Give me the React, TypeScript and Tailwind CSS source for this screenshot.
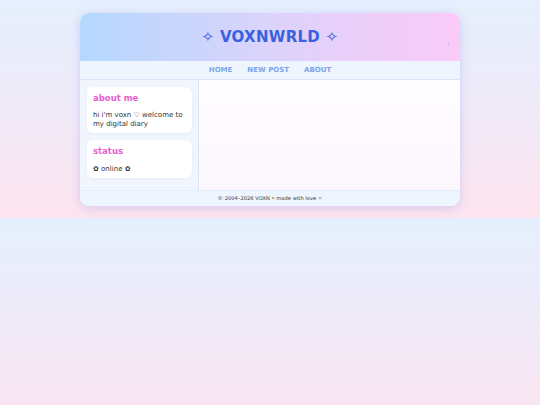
import React from "react";

export default function App() {
  return (
    <div
      className="w-[540px] h-[405px] bg-[linear-gradient(180deg,#e5effd_0%,#f0eaf8_50%,#fde3ee_100%)] bg-[length:100%_218px] bg-repeat-y"
      style={{ fontFamily: '"DejaVu Sans", Verdana, sans-serif' }}
    >
      <div className="pt-[13px] px-[80px]">
        <div className="w-[380px] rounded-[9px] overflow-hidden shadow-[0_2px_10px_rgba(140,150,230,0.35)] bg-white">
          {/* header */}
          <div className="relative h-[48px] flex items-center justify-center bg-[linear-gradient(90deg,#b4d8ff_0%,#dcd3fb_50%,#fbcaf8_100%)]">
            <div className="text-[15px] font-bold text-[#3a62e0] tracking-[0.3px]">✧ VOXNWRLD ✧</div>
            <span className="absolute right-[11px] top-[29px] text-[5px] leading-none text-[#b49cc4]">ı</span>
          </div>
          {/* nav */}
          <div className="h-[19px] pt-[1px] flex items-center justify-center gap-[15px] bg-[#eef5fe] border-b border-[#d8e6fb] text-[7px] font-bold text-[#79a6ea]">
            <span>HOME</span>
            <span>NEW POST</span>
            <span>ABOUT</span>
          </div>
          {/* body */}
          <div className="flex h-[110px]">
            <div className="w-[119px] shrink-0 bg-[#f1f6fe] border-r border-[#d9e6fa] pl-[7px] pr-[6px] pt-[7px] flex flex-col gap-[7px]">
              <div className="bg-white rounded-[6px] h-[46px] px-[6px] pt-[6px] shadow-[0_1px_3px_rgba(160,170,230,0.15)]">
                <div className="text-[8.5px] font-bold text-[#e860cf] leading-[11px]">about me</div>
                <div className="mt-[7px] text-[7px] leading-[8.5px] text-[#333]">hi i'm voxn ♡ welcome to my digital diary</div>
              </div>
              <div className="bg-white rounded-[6px] h-[38px] px-[6px] pt-[6px] shadow-[0_1px_3px_rgba(160,170,230,0.15)]">
                <div className="text-[8.5px] font-bold text-[#e860cf] leading-[11px]">status</div>
                <div className="mt-[8px] text-[7px] leading-[8.5px] text-[#333]">✿ online ✿</div>
              </div>
            </div>
            <div className="flex-1 bg-[linear-gradient(180deg,#fefdff_0%,#fcf7fc_100%)]"></div>
          </div>
          {/* footer */}
          <div className="h-[16px] flex items-center justify-center bg-[#eef5fe] border-t border-[#e4edfb] text-[5.2px] text-[#3a3a3a]">
            © 2004–2026 VOXN • made with love ✧
          </div>
        </div>
      </div>
    </div>
  );
}
